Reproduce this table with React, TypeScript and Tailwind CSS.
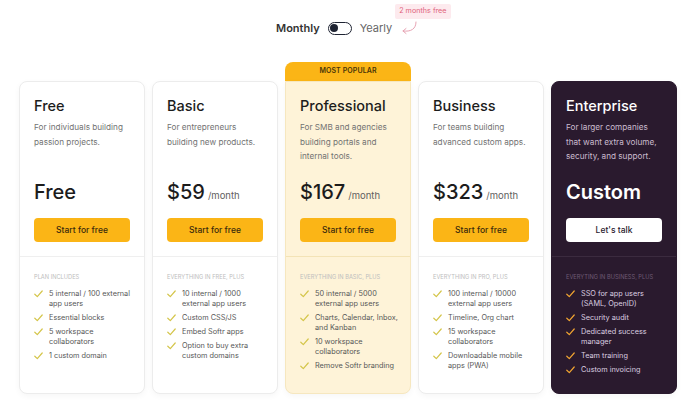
import React from "react";

type Plan = {
  name: string;
  desc: string;
  price: string;
  perMonth?: boolean;
  cta: string;
  label: string;
  features: string[];
  variant: "plain" | "popular" | "dark";
};

const plans: Plan[] = [
  {
    name: "Free",
    desc: "For individuals building passion projects.",
    price: "Free",
    cta: "Start for free",
    label: "PLAN INCLUDES",
    features: ["5 internal / 100 external app users", "Essential blocks", "5 workspace collaborators", "1 custom domain"],
    variant: "plain",
  },
  {
    name: "Basic",
    desc: "For entrepreneurs building new products.",
    price: "$59",
    perMonth: true,
    cta: "Start for free",
    label: "EVERYTHING IN FREE, PLUS",
    features: ["10 internal / 1000 external app users", "Custom CSS/JS", "Embed Softr apps", "Option to buy extra custom domains"],
    variant: "plain",
  },
  {
    name: "Professional",
    desc: "For SMB and agencies building portals and internal tools.",
    price: "$167",
    perMonth: true,
    cta: "Start for free",
    label: "EVERYTHING IN BASIC, PLUS",
    features: ["50 internal / 5000 external app users", "Charts, Calendar, Inbox, and Kanban", "10 workspace collaborators", "Remove Softr branding"],
    variant: "popular",
  },
  {
    name: "Business",
    desc: "For teams building advanced custom apps.",
    price: "$323",
    perMonth: true,
    cta: "Start for free",
    label: "EVERYTHING IN PRO, PLUS",
    features: ["100 internal / 10000 external app users", "Timeline, Org chart", "15 workspace collaborators", "Downloadable mobile apps (PWA)"],
    variant: "plain",
  },
  {
    name: "Enterprise",
    desc: "For larger companies that want extra volume, security, and support.",
    price: "Custom",
    cta: "Let's talk",
    label: "EVERYTING IN BUSINESS, PLUS",
    features: ["SSO for app users (SAML, OpenID)", "Security audit", "Dedicated success manager", "Team training", "Custom invoicing"],
    variant: "dark",
  },
];

const Check = ({ dark }: { dark: boolean }) => (
  <svg width="9" height="8" viewBox="0 0 9 8" fill="none" className="mt-[1px] shrink-0">
    <path
      d="M0.8 4.2 L3.3 6.6 L8.2 1"
      stroke={dark ? "#f2a531" : "#d4c54a"}
      strokeWidth="1.2"
      strokeLinecap="round"
      strokeLinejoin="round"
    />
  </svg>
);

const PlanCard = ({ plan }: { plan: Plan }) => {
  const dark = plan.variant === "dark";
  const popular = plan.variant === "popular";

  const cardClass = dark
    ? "bg-[#2a1a2e] border-[#2a1a2e]"
    : popular
      ? "bg-[#fef3d8] border-[#f6e7bf] rounded-t-none"
      : "bg-white border-[#ececec]";

  return (
    <div className="flex flex-col">
      {popular && (
        <div className="h-[19px] rounded-t-[8px] bg-[#fbb516] flex items-center justify-center text-[7px] font-semibold tracking-[0.1px] text-[#4a3508]">
          MOST POPULAR
        </div>
      )}
      <div className={`h-[313px] rounded-[8px] border shadow-[0_2px_6px_rgba(0,0,0,0.04)] flex flex-col ${cardClass}`}>
        <div className="px-[14px] pt-[14px]">
          <div className="h-[82px]">
            <h2 className={`text-[14.5px] leading-[20px] font-medium ${dark ? "text-white" : "text-[#1c1c1c]"}`}>{plan.name}</h2>
            <p className={`mt-[4px] text-[8.2px] leading-[14.5px] ${dark ? "text-[#cbbccf]" : "text-[#727272]"}`}>{plan.desc}</p>
          </div>
          <div className="h-[28px] flex items-baseline gap-[3px]">
            <span className={`text-[20px] leading-[28px] ${dark ? "text-white font-semibold" : "text-[#1c1c1c] font-medium"}`}>
              {plan.price}
            </span>
            {plan.perMonth && <span className="text-[9.5px] text-[#5e5e5e]">/month</span>}
          </div>
          <button
            className={`mt-[12px] mb-[14px] w-full h-[24px] rounded-[4px] text-[8.5px] font-medium ${
              dark ? "bg-white text-[#2a1a2e]" : "bg-[#fbb516] text-[#3a2a0c]"
            }`}
          >
            {plan.cta}
          </button>
        </div>
        <div className={`border-t pl-[14px] pr-[8px] pt-[15px] ${dark ? "border-[#3b2b3f]" : popular ? "border-[#f3e3b6]" : "border-[#efefef]"}`}>
          <p className={`text-[5.7px] leading-[10px] whitespace-nowrap ${dark ? "text-[#6f5b74]" : "text-[#bdbdbd]"}`}>{plan.label}</p>
          <ul className="mt-[7px] flex flex-col gap-[4.5px]">
            {plan.features.map((f) => (
              <li key={f} className="flex gap-[6px]">
                <Check dark={dark} />
                <span className={`text-[7.3px] leading-[9.7px] ${dark ? "text-[#dccfe0]" : "text-[#575757]"}`}>{f}</span>
              </li>
            ))}
          </ul>
        </div>
      </div>
    </div>
  );
};

export default function App() {
  return (
    <div className="w-[700px] h-[416px] bg-white overflow-hidden" style={{ fontFamily: "Inter, 'Noto Sans', sans-serif" }}>
      <div className="pt-[19px] pl-[276px] flex items-center h-[37px]">
        <span className="text-[11px] font-semibold text-[#333]">Monthly</span>
        <div className="ml-[8px] w-[24px] h-[13px] rounded-full border-[1.5px] border-[#1f2433] bg-white flex items-center px-[1px]">
          <div className="w-[8px] h-[8px] rounded-full bg-[#1f2433]" />
        </div>
        <span className="ml-[8px] text-[11px] text-[#666]">Yearly</span>
        <div className="relative ml-[3px] w-[60px] h-[18px]">
          <span className="absolute left-0 top-[-15px] px-[4px] h-[15px] flex items-center rounded-[2px] bg-[#fdeaee] text-[7.2px] text-[#e0637c] whitespace-nowrap">
            2 months free
          </span>
          <svg width="18" height="14" viewBox="0 0 18 14" className="absolute left-[6px] top-[2px]" fill="none">
            <path d="M15 1 C15 8 10 11 2 10" stroke="#e7a3b3" strokeWidth="1" strokeLinecap="round" />
            <path d="M5 7.5 L2 10 L5 12.5" stroke="#e7a3b3" strokeWidth="1" strokeLinecap="round" strokeLinejoin="round" />
          </svg>
        </div>
      </div>
      <div className="mt-[25px] pl-[19px] grid grid-cols-[repeat(5,126px)] gap-[7px] items-end">
        {plans.map((p) => (
          <PlanCard key={p.name} plan={p} />
        ))}
      </div>
    </div>
  );
}
